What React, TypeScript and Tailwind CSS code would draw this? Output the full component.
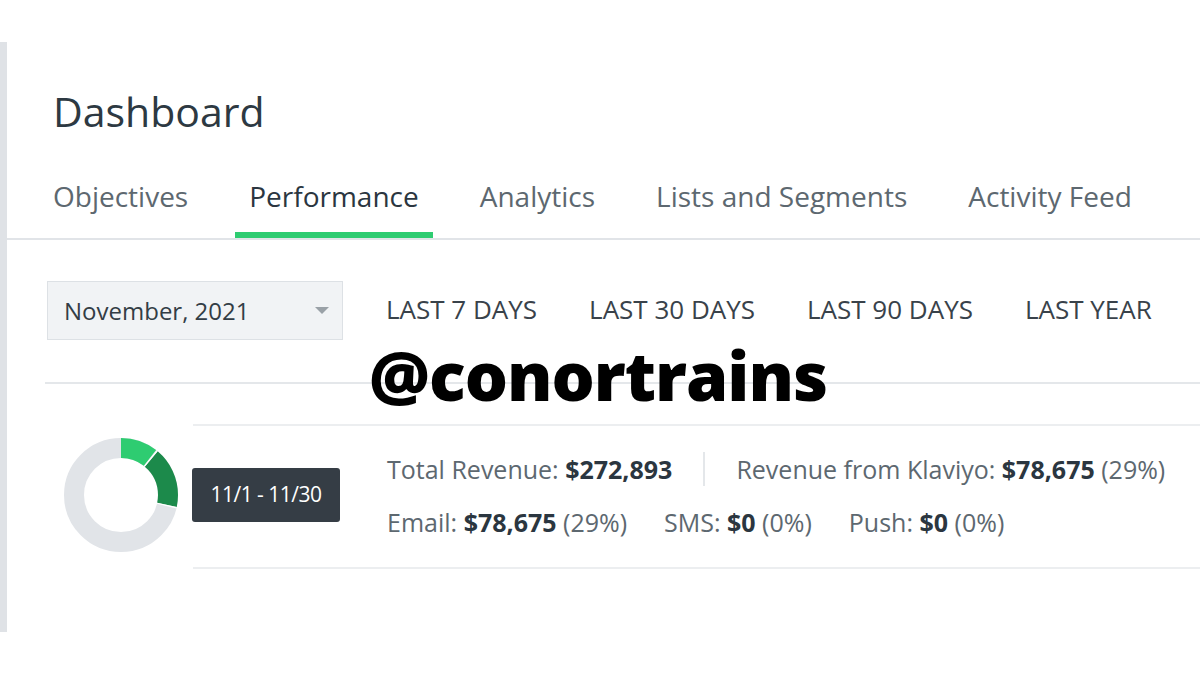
import React from "react";

const tabs = ["Objectives", "Performance", "Analytics", "Lists and Segments", "Activity Feed"];
const ranges = ["LAST 7 DAYS", "LAST 30 DAYS", "LAST 90 DAYS", "LAST YEAR"];

const Donut: React.FC = () => {
  const r = 47;
  const c = 2 * Math.PI * r;
  const seg = (start: number, len: number) => ({
    strokeDasharray: `${(len / 360) * c} ${c}`,
    strokeDashoffset: `${-(start / 360) * c}`,
  });
  return (
    <svg width="116" height="116" viewBox="0 0 116 116">
      <g transform="rotate(-90 58 58)">
        <circle cx="58" cy="58" r={r} fill="none" stroke="#e1e4e8" strokeWidth="20" />
        <circle cx="58" cy="58" r={r} fill="none" stroke="#2ecc71" strokeWidth="20" style={seg(0, 38)} />
        <circle cx="58" cy="58" r={r} fill="none" stroke="#1c8a4b" strokeWidth="20" style={seg(40, 62)} />
        <circle cx="58" cy="58" r={r} fill="none" stroke="#ffffff" strokeWidth="20" style={seg(38.5, 1.5)} />
        <circle cx="58" cy="58" r={r} fill="none" stroke="#ffffff" strokeWidth="20" style={seg(102, 1.5)} />
      </g>
    </svg>
  );
};

export default function App() {
  return (
    <div className="w-[1200px] h-[675px] bg-white overflow-hidden relative font-['Open_Sans','Noto_Sans',sans-serif]">
      <div className="flex pt-[42px] h-[632px]">
        <div className="w-[7px] bg-[#dfe2e6] shrink-0" />
        <div className="flex-1 flex flex-col">
          <h1 className="pl-[46px] pt-[46px] text-[41px] leading-[46px] text-[#2d3942]">
            Dashboard
          </h1>
          <div className="flex gap-[61px] pl-[46px] mt-[45px] border-b-2 border-[#e1e4e8] text-[28px] leading-[34px] text-[#5d6870]">
            {tabs.map((t, i) => (
              <div
                key={t}
                className={i === 1 ? "text-[#2b3640] border-b-[6px] border-[#2ecc71] px-[14px] -mx-[14px] pb-[19px]" : "pb-[25px]"}
              >
                {t}
              </div>
            ))}
          </div>
          <div className="flex items-center pl-[40px] mt-[41px]">
            <div className="w-[296px] h-[59px] bg-[#f1f3f5] border border-[#dde1e5] flex items-center justify-between pl-[16px] pr-[13px] text-[24px] text-[#333d45]">
              <span>November, 2021</span>
              <span className="w-0 h-0 border-l-[7px] border-r-[7px] border-t-[7px] border-l-transparent border-r-transparent border-t-[#9aa1a7]" />
            </div>
            <div className="flex gap-[52px] ml-[43px] text-[26px] text-[#39424a] mb-[2px]">
              {ranges.map((r) => (
                <span key={r}>{r}</span>
              ))}
            </div>
          </div>
          <div className="ml-[38px] mt-[42px] border-t-2 border-[#e4e7ea]" />
          <div className="flex mt-[40px]">
            <div className="pl-[56px] pt-[13px]">
              <Donut />
            </div>
            <div className="flex-1 ml-[14px] border-t-2 border-b-2 border-[#eceef0] h-[145px] flex items-center">
              <div className="w-[148px] h-[54px] bg-[#353d45] rounded-[3px] text-white text-[21px] tracking-[-0.5px] flex items-center justify-center -ml-[1px] mt-[-4px]">
                11/1 - 11/30
              </div>
              <div className="ml-[47px] flex flex-col gap-[20px] text-[25px] leading-[32px] text-[#5d6870] mt-[-4px]">
                <div className="flex items-center">
                  <span>
                    Total Revenue: <b className="text-[#2b3640] font-bold">$272,893</b>
                  </span>
                  <span className="w-[2px] h-[34px] bg-[#e4e7ea] mx-[31px]" />
                  <span>
                    Revenue from Klaviyo: <b className="text-[#2b3640] font-bold">$78,675</b> (29%)
                  </span>
                </div>
                <div className="flex gap-[37px]">
                  <span>
                    Email: <b className="text-[#2b3640] font-bold">$78,675</b> (29%)
                  </span>
                  <span>
                    SMS: <b className="text-[#2b3640] font-bold">$0</b> (0%)
                  </span>
                  <span>
                    Push: <b className="text-[#2b3640] font-bold">$0</b> (0%)
                  </span>
                </div>
              </div>
            </div>
          </div>
        </div>
      </div>
      <div className="absolute left-[369px] top-[341px] text-[68px] leading-none font-extrabold text-black tracking-[-1px]">
        @conortrains
      </div>
    </div>
  );
}
